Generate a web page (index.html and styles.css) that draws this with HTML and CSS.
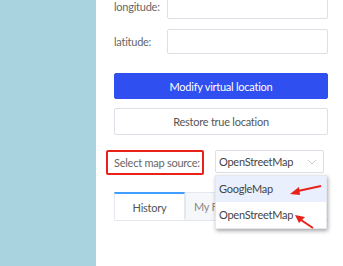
FILE: index.html
```html
<!DOCTYPE html>
<html lang="en">
<head>
    <meta charset="UTF-8">
    <meta name="viewport" content="width=device-width, initial-scale=1.0">
    <title>Virtual location</title>
    <link rel="stylesheet" href="styles.css">
</head>
<body>
    <div class="page">
        <aside class="side"></aside>
        <main class="panel">
            <div class="field-row first">
                <label for="lng">longitude:</label>
                <input type="text" id="lng" class="text-input">
            </div>
            <div class="field-row">
                <label for="lat">latitude:</label>
                <input type="text" id="lat" class="text-input">
            </div>

            <button type="button" class="btn btn-primary">Modify virtual location</button>
            <button type="button" class="btn btn-plain">Restore true location</button>

            <div class="source-row">
                <span class="source-label">Select map source:</span>
                <div class="select">
                    <span class="select-value">OpenStreetMap</span>
                    <svg class="chevron" width="10" height="6" viewBox="0 0 10 6"><path d="M1 1l4 4 4-4" fill="none" stroke="#c8cbd0" stroke-width="1"/></svg>
                    <ul class="dropdown">
                        <li class="option hover">GoogleMap</li>
                        <li class="option">OpenStreetMap</li>
                    </ul>
                </div>
            </div>

            <div class="tabs">
                <div class="tab active">History</div>
                <div class="tab">My F</div>
            </div>

            <svg class="arrows" width="343" height="266" viewBox="0 0 343 266">
                <path d="M321 186 L298 191" stroke="#e8221b" stroke-width="2" fill="none"/>
                <path d="M290 194 L299 187 L300 195 Z" fill="#e8221b"/>
                <path d="M313 228 L301 220" stroke="#e8221b" stroke-width="2" fill="none"/>
                <path d="M295 215 L305 217 L299 223 Z" fill="#e8221b"/>
            </svg>
        </main>
    </div>
</body>
</html>
```

FILE: styles.css
```css
body { margin: 0; font-family: Lato, "Noto Sans", sans-serif; font-size: 11px; letter-spacing: -0.25px; color: #606266; background: #fff; overflow: hidden; white-space: nowrap; }
.page { display: flex; height: 266px; }
.side { width: 96px; flex: none; background-color: #a9d3df; }
.panel { width: 214px; padding-left: 18px; display: flex; flex-direction: column; }
.field-row { display: flex; align-items: center; height: 25px; margin-bottom: 10px; }
.field-row.first { margin-top: -6px; }
.field-row label { width: 53px; color: #666; }
.text-input { width: 161px; height: 25px; box-sizing: border-box; border: 1px solid #dcdfe6; border-radius: 2px; padding: 0 6px; outline: none; }
.btn { width: 214px; box-sizing: border-box; border-radius: 2px; font-family: inherit; font-size: 11px; letter-spacing: -0.25px; cursor: pointer; }
.btn-primary { height: 26px; margin-top: 9px; background-color: #2f4ff0; border: 1px solid #2f4ff0; color: #fff; }
.btn-plain { height: 27px; margin-top: 9px; background-color: #fff; border: 1px solid #dcdfe6; color: #555; }
.source-row { display: flex; align-items: flex-start; margin-top: 15px; margin-left: -8px; }
.source-label { width: 98px; height: 25px; box-sizing: border-box; border: 2px solid #e8221b; border-radius: 2px; padding-left: 6px; line-height: 21px; color: #666; }
.select { position: relative; margin-left: 11px; width: 109px; height: 23px; box-sizing: border-box; border: 1px solid #dcdfe6; border-radius: 2px; display: flex; align-items: center; padding-left: 3px; color: #444; }
.select-value { flex: 1; }
.chevron { margin-right: 6px; }
.dropdown { position: absolute; top: 24px; left: -1px; width: 110px; margin: 0; padding: 0; list-style: none; background: #fff; border: 1px solid #e4e7ed; box-shadow: 1px 2px 4px rgba(0, 0, 0, 0.35); z-index: 2; }
.option { height: 26px; line-height: 26px; padding-left: 3px; color: #444; }
.option.hover { background-color: #e9effc; }
.tabs { display: flex; margin-top: 17px; border-bottom: 1px solid #e4e7ed; width: 214px; }
.tab { width: 30px; height: 27px; line-height: 27px; padding: 0 0 0 8px; overflow: hidden; background-color: #f5f7fa; color: #888; border: 1px solid #e4e7ed; border-bottom: none; }
.tab.active { width: 71px; box-sizing: border-box; padding: 0; text-align: center; background-color: #fff; color: #555; border-top: 2px solid #409eff; }
.arrows { position: absolute; left: 0; top: 0; z-index: 3; pointer-events: none; }
```
